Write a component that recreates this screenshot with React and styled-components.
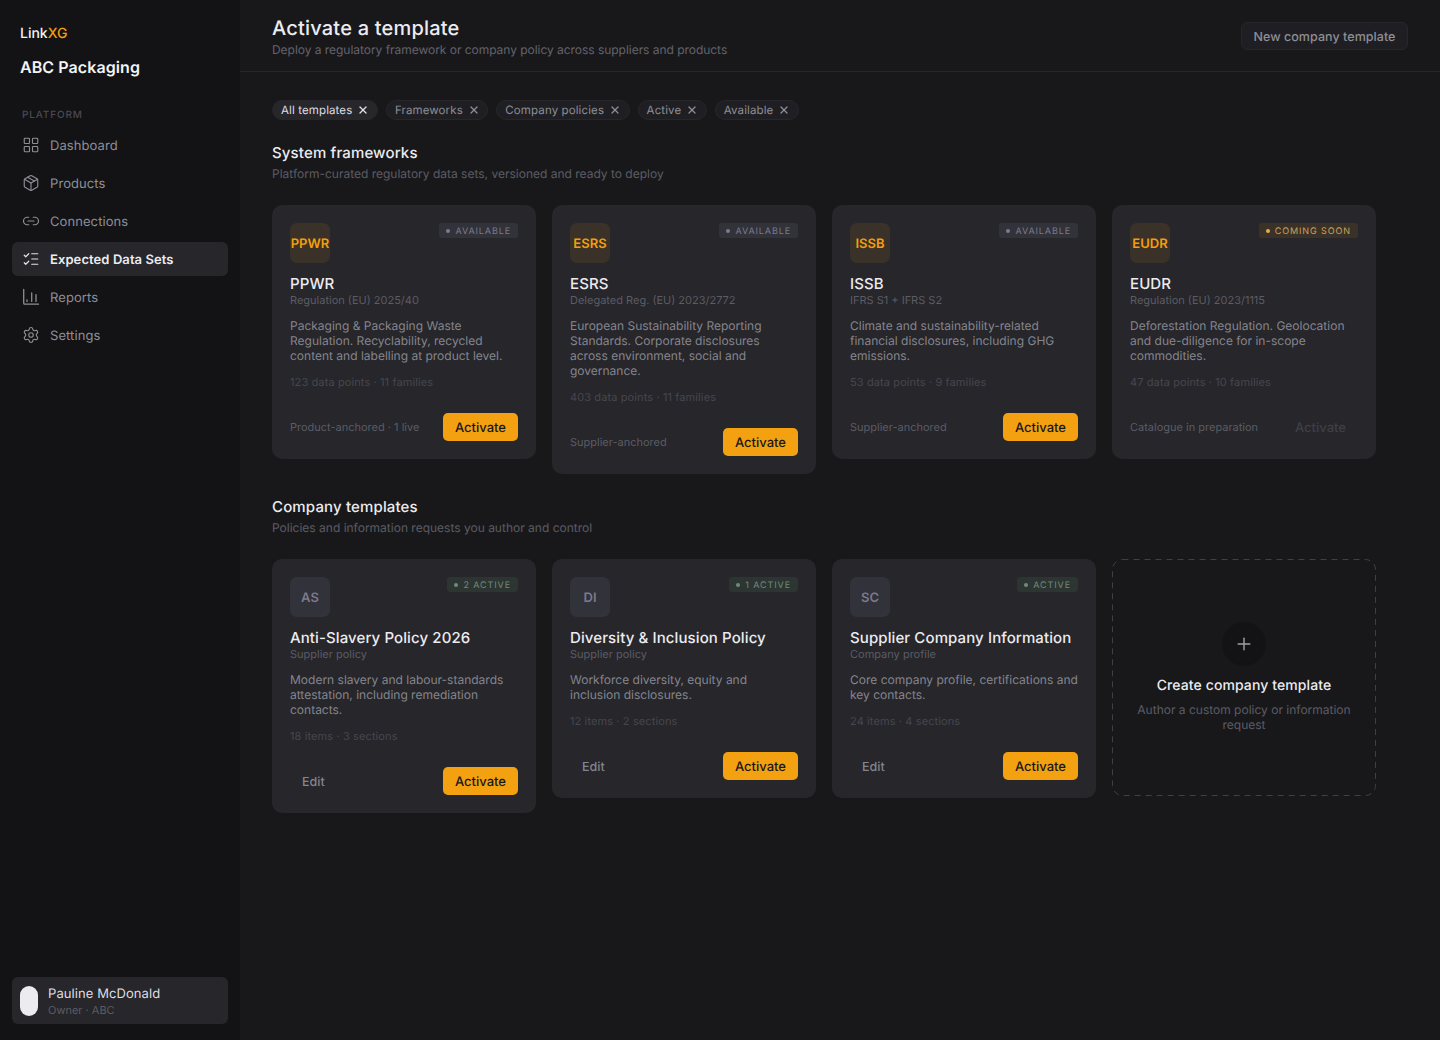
import React from 'react';
import styled, { createGlobalStyle } from 'styled-components';
import { LayoutGrid, Package, Link2, ListChecks, Settings, X, Plus } from 'lucide-react';

const Global = createGlobalStyle`
  html, body { margin: 0; padding: 0; background: #18181b; }
  body { font-family: Inter, "Liberation Sans", sans-serif; -webkit-font-smoothing: antialiased; text-rendering: geometricPrecision; }
  * { box-sizing: border-box; }
  button { text-rendering: geometricPrecision; }
`;

const Shell = styled.div`display: flex; width: 1440px; height: 1040px; overflow: hidden; background: #18181b;`;
const Sidebar = styled.aside`width: 240px; flex: none; background: #131316; display: flex; flex-direction: column; padding: 25px 12px 16px;`;
const Brand = styled.div`padding: 0 8px; font-size: 14px; line-height: 18px; font-weight: 500; color: #f4f4f5;`;
const BrandAccent = styled.span`color: #f59e0b;`;
const Org = styled.div`padding: 0 8px; margin-top: 14px; font-size: 16px; line-height: 20px; font-weight: 600; letter-spacing: 0.005em; color: #f4f4f5;`;
const NavLabel = styled.div`padding: 0 10px; margin-top: 31px; font-size: 10px; line-height: 14px; font-weight: 500; letter-spacing: 0.085em; color: #4a4a52;`;
const Nav = styled.nav`display: flex; flex-direction: column; gap: 4px; margin-top: 6px; flex: 1;`;
const NavItem = styled.div`
  display: flex; align-items: center; gap: 10px; height: 34px; padding: 0 10px; border-radius: 6px;
  font-size: 13px; letter-spacing: 0.006em; font-weight: ${p => p.$active ? 600 : 400};
  color: ${p => p.$active ? '#ececf0' : '#8e8e96'};
  background: ${p => p.$active ? '#26262b' : 'transparent'};
  svg { flex: none; color: ${p => p.$active ? '#e4e4e8' : '#8e8e96'}; }
`;
const NavText = styled.span`padding-top: 2px;`;
const User = styled.div`display: flex; align-items: center; gap: 10px; height: 47px; padding: 0 8px; background: #26262b; border-radius: 6px;`;
const Avatar = styled.div`width: 18px; height: 30px; border-radius: 9px; background: #ebebf0; flex: none;`;
const UserName = styled.div`margin-top: 3px; font-size: 13px; line-height: 17px; letter-spacing: 0.006em; color: #dedee2;`;
const UserRole = styled.div`font-size: 11px; line-height: 15px; color: #5c5c64;`;

const Main = styled.main`flex: 1; min-width: 0; display: flex; flex-direction: column;`;
const Header = styled.header`height: 72px; flex: none; display: flex; align-items: center; justify-content: space-between; padding: 0 32px; border-bottom: 1px solid #26262b;`;
const Title = styled.h1`margin: 0; padding-top: 1px; font-size: 20px; line-height: 26px; font-weight: 500; letter-spacing: 0.01em; color: #ececf0;`;
const Subtitle = styled.p`margin: 1px 0 0; font-size: 12px; line-height: 16px; letter-spacing: -0.003em; color: #63636b;`;
const GhostBtn = styled.button`
  height: 28px; padding: 3px 11.5px 0; font: 500 12.5px Inter, sans-serif; letter-spacing: 0.004em; color: #8e8e96;
  background: #1f1f23; border: 1px solid #26262b; border-radius: 6px;
`;
const Content = styled.div`padding: 28px 32px 0;`;
const Chips = styled.div`display: flex; gap: 8px;`;
const Chip = styled.div`
  display: flex; align-items: center; gap: 5.5px; height: 20px; padding: 0 8px; border-radius: 10px;
  font-size: 11.5px; letter-spacing: 0.01em; color: ${p => p.$active ? '#dedee2' : '#8e8e96'};
  background: ${p => p.$active ? '#26262b' : '#1f1f23'};
  border: 1px solid #26262b;
  svg { flex: none; color: ${p => p.$active ? '#e4e4e8' : '#8e8e96'}; margin: 0 -0.5px; }
`;
const Section = styled.section`margin-top: 24px;`;
const SectionTitle = styled.h2`margin: 0; font-size: 15px; line-height: 18px; font-weight: 500; letter-spacing: 0.01em; color: #ececf0;`;
const SectionSub = styled.p`margin: 4px 0 0; font-size: 12px; line-height: 16px; color: #5c5c64;`;
const Grid = styled.div`display: grid; grid-template-columns: repeat(4, 264px); gap: 16px; align-items: start; margin-top: 23px;`;
const Card = styled.article`background: #26262b; border-radius: 10px; padding: 18px; display: flex; flex-direction: column;`;
const CardTop = styled.div`display: flex; justify-content: space-between; align-items: flex-start;`;
const Mark = styled.div`
  width: 40px; height: 40px; border-radius: 7px; padding-top: 2px; display: flex; align-items: center; justify-content: center;
  font-size: 13px; font-weight: 600; white-space: nowrap;
  color: ${p => p.$amber ? '#f59e0b' : '#7c7a8c'};
  background: ${p => p.$amber ? '#3a3228' : '#32323b'};
`;
const tones = {
  grey: ['#32323b', '#7c7a8c', '#7c7a8c'],
  amber: ['#3a3228', '#c9a25c', '#e0b050'],
  green: ['#2d3532', '#6f8a7c', '#6f8a7c'],
};
const Badge = styled.div`
  display: flex; align-items: center; gap: 5px; height: 15px; padding: 0 7px; border-radius: 3px;
  font-size: 9px; font-weight: 400; letter-spacing: 0.1em; white-space: nowrap;
  background: ${p => tones[p.$tone][0]}; color: ${p => tones[p.$tone][1]};
  &::before { content: ''; width: 4px; height: 4px; border-radius: 50%; background: ${p => tones[p.$tone][2]}; }
`;
const BadgeText = styled.span`padding-top: 2px;`;
const CardName = styled.h3`margin: 12px 0 0; font-size: 15px; line-height: 17px; font-weight: 500; letter-spacing: 0.007em; color: #ececf0;`;
const CardRef = styled.div`margin-top: 0; font-size: 11px; line-height: 16px; color: #5c5c64;`;
const CardDesc = styled.p`margin: 10px 0 0; font-size: 12px; line-height: 15px; color: #85858d;`;
const CardMeta = styled.div`margin-top: 11px; font-size: 11px; line-height: 16px; letter-spacing: 0.01em; color: #46464e;`;
const CardFoot = styled.div`display: flex; justify-content: space-between; align-items: center; margin-top: 23px; height: 28px;`;
const FootNote = styled.span`font-size: 11px; color: #5c5c64;`;
const EditBtn = styled.button`height: 28px; padding: 2px 12px 0; font: 500 12.5px Inter, sans-serif; color: #85858d; background: none; border: 0;`;
const ActivateBtn = styled.button`
  height: 28px; padding: 2px 12px 0; border: 0; border-radius: 5px; font: 500 13px Inter, sans-serif;
  color: ${p => p.disabled ? '#3f3f46' : '#18181b'};
  background: ${p => p.disabled ? 'transparent' : '#f3a110'};
`;
const CreateCard = styled.article`
  position: relative; height: 237px; display: flex; flex-direction: column;
  align-items: center; text-align: center; padding: 63px 18px 0;
`;
const DashedFrame = styled.svg`position: absolute; inset: 0; width: 264px; height: 237px; pointer-events: none;`;
const PlusCircle = styled.div`width: 44px; height: 44px; border-radius: 50%; background: #131316; display: flex; align-items: center; justify-content: center; color: #a0a0a8;`;
const CreateTitle = styled.div`margin-top: 11px; font-size: 14px; line-height: 18px; font-weight: 500; letter-spacing: 0.007em; color: #ececf0;`;
const CreateSub = styled.div`margin-top: 7px; font-size: 12px; line-height: 15px; color: #5c5c64;`;

const ReportsIcon = () => (
  <svg width="18" height="18" viewBox="0 0 18 18" fill="none" stroke="currentColor" strokeWidth="1.3" strokeLinecap="round">
    <path d="M1.7 1.5V15a1.2 1.2 0 0 0 1.2 1.2H16.5" />
    <path d="M5 13.4v-1.6M9.7 13.4V5M14 13.4V6.6" />
  </svg>
);

const nav = [
  ['Dashboard', <LayoutGrid size={18} strokeWidth={1.5} />],
  ['Products', <Package size={18} strokeWidth={1.5} />],
  ['Connections', <Link2 size={18} strokeWidth={1.6} />],
  ['Expected Data Sets', <ListChecks size={18} strokeWidth={1.6} />, true],
  ['Reports', <ReportsIcon />],
  ['Settings', <Settings size={18} strokeWidth={1.5} />],
];
const chips = ['All templates', 'Frameworks', 'Company policies', 'Active', 'Available'];
const frameworks = [
  { code: 'PPWR', ref: 'Regulation (EU) 2025/40', desc: ['Packaging & Packaging Waste', 'Regulation. Recyclability, recycled', 'content and labelling at product level.'], meta: '123 data points · 11 families', note: 'Product-anchored · 1 live' },
  { code: 'ESRS', ref: 'Delegated Reg. (EU) 2023/2772', desc: ['European Sustainability Reporting', 'Standards. Corporate disclosures', 'across environment, social and', 'governance.'], meta: '403 data points · 11 families', note: 'Supplier-anchored' },
  { code: 'ISSB', ref: 'IFRS S1 + IFRS S2', desc: ['Climate and sustainability-related', 'financial disclosures, including GHG', 'emissions.'], meta: '53 data points · 9 families', note: 'Supplier-anchored' },
  { code: 'EUDR', ref: 'Regulation (EU) 2023/1115', desc: ['Deforestation Regulation. Geolocation', 'and due-diligence for in-scope', 'commodities.'], meta: '47 data points · 10 families', note: 'Catalogue in preparation', soon: true },
];
const company = [
  { mark: 'AS', name: 'Anti-Slavery Policy 2026', ref: 'Supplier policy', badge: '2 ACTIVE', desc: ['Modern slavery and labour-standards', 'attestation, including remediation', 'contacts.'], meta: '18 items · 3 sections' },
  { mark: 'DI', name: 'Diversity & Inclusion Policy', ref: 'Supplier policy', badge: '1 ACTIVE', desc: ['Workforce diversity, equity and', 'inclusion disclosures.'], meta: '12 items · 2 sections' },
  { mark: 'SC', name: 'Supplier Company Information', ref: 'Company profile', badge: 'ACTIVE', desc: ['Core company profile, certifications and', 'key contacts.'], meta: '24 items · 4 sections' },
];
const Lines = ({ lines }) => lines.map((l, i) => <React.Fragment key={i}>{l}{i < lines.length - 1 && <br />}</React.Fragment>);

export default function App() {
  return (
    <Shell>
      <Global />
      <Sidebar>
        <Brand>Link<BrandAccent>XG</BrandAccent></Brand>
        <Org>ABC Packaging</Org>
        <NavLabel>PLATFORM</NavLabel>
        <Nav>
          {nav.map(([label, icon, active]) => <NavItem key={label} $active={active}>{icon}<NavText>{label}</NavText></NavItem>)}
        </Nav>
        <User>
          <Avatar />
          <div>
            <UserName>Pauline McDonald</UserName>
            <UserRole>Owner · ABC</UserRole>
          </div>
        </User>
      </Sidebar>
      <Main>
        <Header>
          <div>
            <Title>Activate a template</Title>
            <Subtitle>Deploy a regulatory framework or company policy across suppliers and products</Subtitle>
          </div>
          <GhostBtn>New company template</GhostBtn>
        </Header>
        <Content>
          <Chips>
            {chips.map((c, i) => <Chip key={c} $active={i === 0}>{c}<X size={12} strokeWidth={2.6} /></Chip>)}
          </Chips>
          <Section>
            <SectionTitle>System frameworks</SectionTitle>
            <SectionSub>Platform-curated regulatory data sets, versioned and ready to deploy</SectionSub>
            <Grid>
              {frameworks.map(f => (
                <Card key={f.code}>
                  <CardTop>
                    <Mark $amber>{f.code}</Mark>
                    <Badge $tone={f.soon ? 'amber' : 'grey'}><BadgeText>{f.soon ? 'COMING SOON' : 'AVAILABLE'}</BadgeText></Badge>
                  </CardTop>
                  <CardName>{f.code}</CardName>
                  <CardRef>{f.ref}</CardRef>
                  <CardDesc><Lines lines={f.desc} /></CardDesc>
                  <CardMeta>{f.meta}</CardMeta>
                  <CardFoot>
                    <FootNote>{f.note}</FootNote>
                    <ActivateBtn disabled={f.soon}>Activate</ActivateBtn>
                  </CardFoot>
                </Card>
              ))}
            </Grid>
          </Section>
          <Section>
            <SectionTitle>Company templates</SectionTitle>
            <SectionSub>Policies and information requests you author and control</SectionSub>
            <Grid>
              {company.map(c => (
                <Card key={c.mark}>
                  <CardTop>
                    <Mark>{c.mark}</Mark>
                    <Badge $tone="green"><BadgeText>{c.badge}</BadgeText></Badge>
                  </CardTop>
                  <CardName>{c.name}</CardName>
                  <CardRef>{c.ref}</CardRef>
                  <CardDesc><Lines lines={c.desc} /></CardDesc>
                  <CardMeta>{c.meta}</CardMeta>
                  <CardFoot>
                    <EditBtn>Edit</EditBtn>
                    <ActivateBtn>Activate</ActivateBtn>
                  </CardFoot>
                </Card>
              ))}
              <CreateCard>
                <DashedFrame viewBox="0 0 264 237" fill="none">
                  <rect x="0.5" y="0.5" width="263" height="236" rx="10" stroke="#3f3f46" strokeDasharray="6 5" />
                </DashedFrame>
                <PlusCircle><Plus size={20} strokeWidth={1.7} /></PlusCircle>
                <CreateTitle>Create company template</CreateTitle>
                <CreateSub>Author a custom policy or information request</CreateSub>
              </CreateCard>
            </Grid>
          </Section>
        </Content>
      </Main>
    </Shell>
  );
}
